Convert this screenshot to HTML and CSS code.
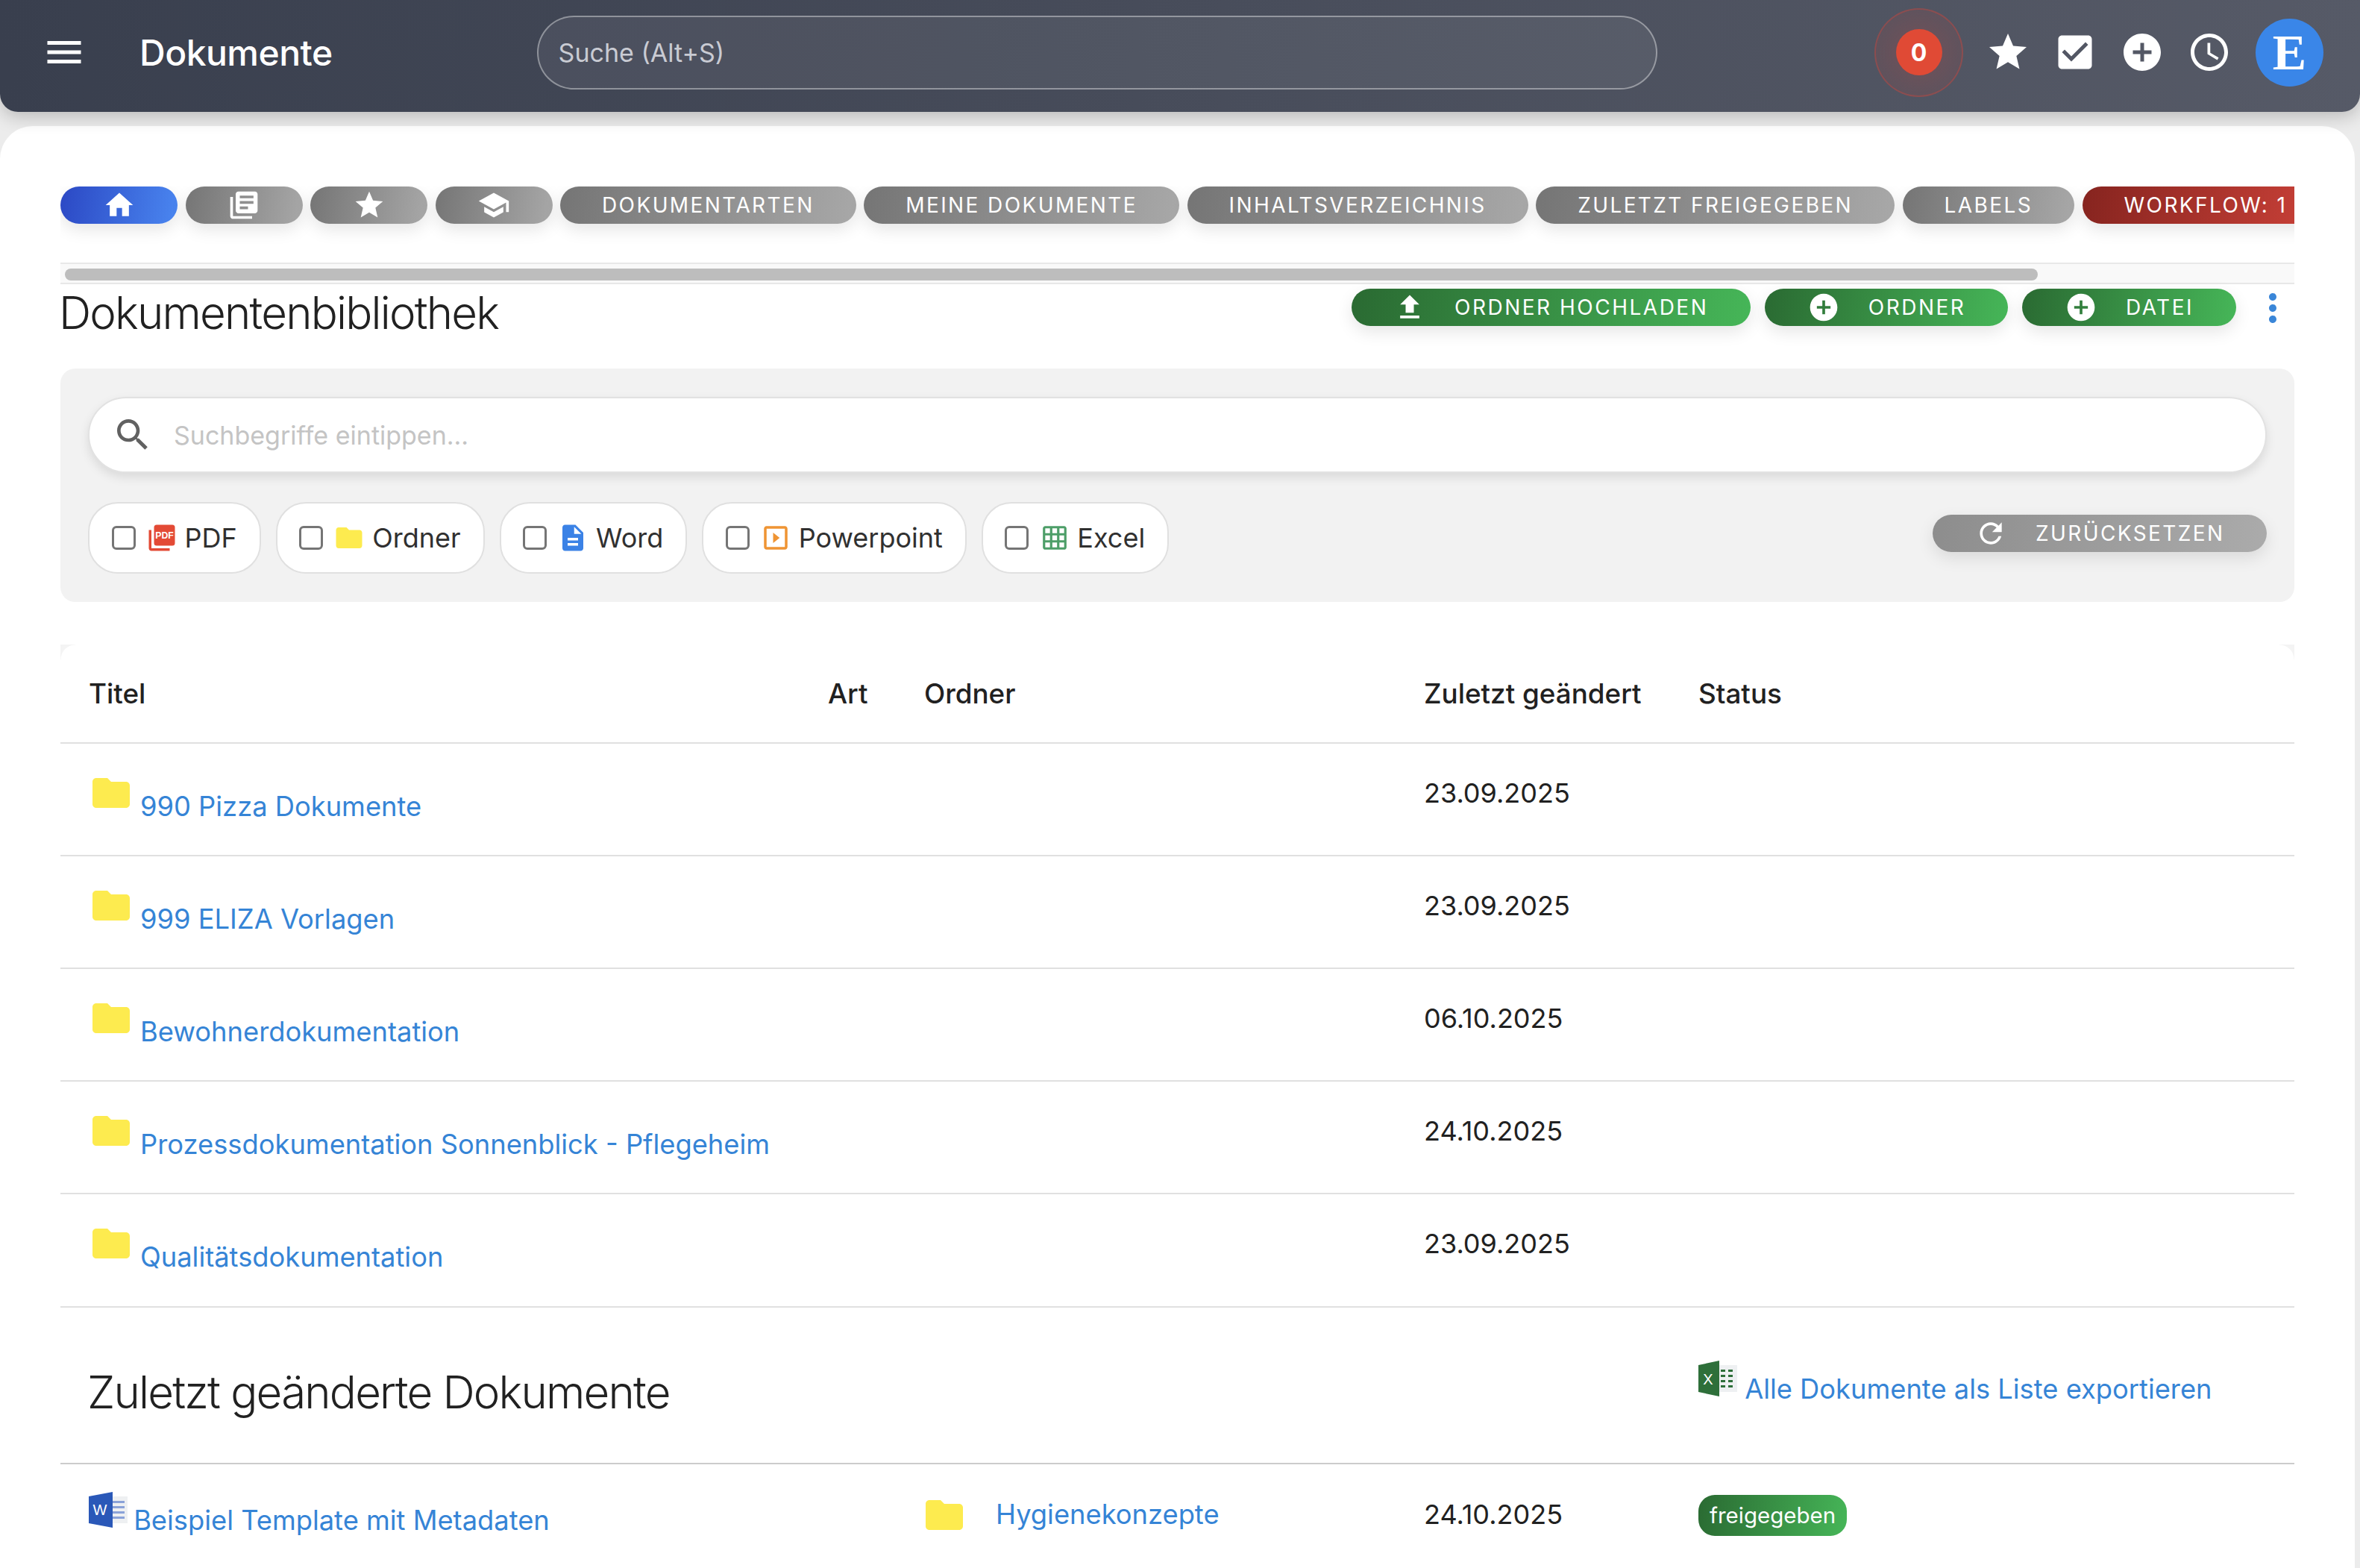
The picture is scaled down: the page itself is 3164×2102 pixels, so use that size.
FILE: index.html
```html
<!DOCTYPE html>
<html lang="de">

<head>
    <meta charset="utf-8">
    <meta name="viewport" content="width=device-width, initial-scale=1.0">
    <title>Dokumente</title>
    <link rel="stylesheet" href="styles.css">
</head>

<body>

    <!-- icon sprite -->
    <svg class="sprite" aria-hidden="true">
        <symbol id="i-menu" viewBox="0 0 24 24"><path d="M3 18h18v-2H3v2zm0-5h18v-2H3v2zm0-7v2h18V6H3z"/></symbol>
        <symbol id="i-home" viewBox="0 0 24 24"><path d="M10 20v-6h4v6h5v-8h3L12 3 2 12h3v8z"/></symbol>
        <symbol id="i-books" viewBox="0 0 24 24"><path d="M4 6H2v14c0 1.1.9 2 2 2h14v-2H4V6zm16-4H8c-1.1 0-2 .9-2 2v12c0 1.1.9 2 2 2h12c1.1 0 2-.9 2-2V4c0-1.1-.9-2-2-2zm-1 9H9V9h10v2zm-4 4H9v-2h6v2zm4-8H9V5h10v2z"/></symbol>
        <symbol id="i-star" viewBox="0 0 24 24"><path d="M12 17.27L18.18 21l-1.64-7.03L22 9.24l-7.19-.61L12 2 9.19 8.63 2 9.24l5.46 4.73L5.82 21z"/></symbol>
        <symbol id="i-school" viewBox="0 0 24 24"><path d="M5 13.18v4L12 21l7-3.82v-4L12 17l-7-3.82zM12 3L1 9l11 6 9-4.91V17h2V9L12 3z"/></symbol>
        <symbol id="i-check" viewBox="0 0 24 24"><path d="M19 3H5c-1.11 0-2 .9-2 2v14c0 1.1.89 2 2 2h14c1.11 0 2-.9 2-2V5c0-1.1-.89-2-2-2zm-9 14l-5-5 1.41-1.41L10 14.17l7.59-7.59L19 8l-9 9z"/></symbol>
        <symbol id="i-add" viewBox="0 0 24 24"><path d="M12 2C6.48 2 2 6.48 2 12s4.48 10 10 10 10-4.48 10-10S17.52 2 12 2zm5 11h-4v4h-2v-4H7v-2h4V7h2v4h4v2z"/></symbol>
        <symbol id="i-clock" viewBox="0 0 24 24"><path d="M11.99 2C6.47 2 2 6.48 2 12s4.47 10 9.99 10C17.52 22 22 17.52 22 12S17.52 2 11.99 2zM12 20c-4.42 0-8-3.58-8-8s3.58-8 8-8 8 3.58 8 8-3.58 8-8 8zm.5-13H11v6l5.25 3.15.75-1.23-4.5-2.67z"/></symbol>
        <symbol id="i-upload" viewBox="0 0 24 24"><path d="M9 16h6v-6h4l-7-7-7 7h4zm-4 2h14v2H5z"/></symbol>
        <symbol id="i-refresh" viewBox="0 0 24 24"><path d="M17.65 6.35C16.2 4.9 14.21 4 12 4c-4.42 0-7.99 3.58-7.99 8s3.57 8 7.99 8c3.73 0 6.84-2.55 7.73-6h-2.08c-.82 2.33-3.04 4-5.65 4-3.31 0-6-2.69-6-6s2.69-6 6-6c1.66 0 3.14.69 4.22 1.78L13 11h7V4l-2.35 2.35z"/></symbol>
        <symbol id="i-search" viewBox="0 0 24 24"><path d="M15.5 14h-.79l-.28-.27C15.41 12.59 16 11.11 16 9.5 16 5.91 13.09 3 9.5 3S3 5.91 3 9.5 5.91 16 9.5 16c1.61 0 3.09-.59 4.23-1.57l.27.28v.79l5 4.99L20.49 19l-4.99-5zm-6 0C7.01 14 5 11.99 5 9.5S7.01 5 9.5 5 14 7.01 14 9.5 11.99 14 9.5 14z"/></symbol>
        <symbol id="i-folder" viewBox="0 0 24 24"><path d="M10 4H4c-1.1 0-1.99.9-1.99 2L2 18c0 1.1.9 2 2 2h16c1.1 0 2-.9 2-2V8c0-1.1-.9-2-2-2h-8l-2-2z"/></symbol>
        <symbol id="i-more" viewBox="0 0 24 24"><path d="M12 8c1.1 0 2-.9 2-2s-.9-2-2-2-2 .9-2 2 .9 2 2 2zm0 2c-1.1 0-2 .9-2 2s.9 2 2 2 2-.9 2-2-.9-2-2-2zm0 6c-1.1 0-2 .9-2 2s.9 2 2 2 2-.9 2-2-.9-2-2-2z"/></symbol>
        <symbol id="i-doc" viewBox="0 0 24 24"><path d="M14 2H6c-1.1 0-1.99.9-1.99 2L4 20c0 1.1.89 2 1.99 2H18c1.1 0 2-.9 2-2V8l-6-6zm2 16H8v-2h8v2zm0-4H8v-2h8v2zm-3-5V3.5L18.5 9H13z"/></symbol>
        <symbol id="i-slides" viewBox="0 0 24 24"><path d="M10 8v8l5-4-5-4zm9-5H5c-1.1 0-2 .9-2 2v14c0 1.1.9 2 2 2h14c1.1 0 2-.9 2-2V5c0-1.1-.9-2-2-2zm0 16H5V5h14v14z"/></symbol>
        <symbol id="i-grid" viewBox="0 0 24 24"><path d="M20 2H4c-1.1 0-2 .9-2 2v16c0 1.1.9 2 2 2h16c1.1 0 2-.9 2-2V4c0-1.1-.9-2-2-2zM8 20H4v-4h4v4zm0-6H4v-4h4v4zm0-6H4V4h4v4zm6 12h-4v-4h4v4zm0-6h-4v-4h4v4zm0-6h-4V4h4v4zm6 12h-4v-4h4v4zm0-6h-4v-4h4v4zm0-6h-4V4h4v4z"/></symbol>
    </svg>

    <header class="topbar">
        <svg class="ico topbar-menu"><use href="#i-menu"/></svg>
        <div class="topbar-title">Dokumente</div>
        <div class="topbar-search">Suche (Alt+S)</div>
        <div class="topbar-actions">
            <div class="alarm"><span class="alarm-dot">0</span></div>
            <svg class="ico action"><use href="#i-star"/></svg>
            <svg class="ico action"><use href="#i-check"/></svg>
            <svg class="ico action"><use href="#i-add"/></svg>
            <svg class="ico action"><use href="#i-clock"/></svg>
            <div class="avatar">E</div>
        </div>
    </header>

    <main class="card">

        <nav class="tabs">
            <a class="pill blue"><svg class="ico"><use href="#i-home"/></svg></a>
            <a class="pill gray"><svg class="ico"><use href="#i-books"/></svg></a>
            <a class="pill gray"><svg class="ico"><use href="#i-star"/></svg></a>
            <a class="pill gray"><svg class="ico"><use href="#i-school"/></svg></a>
            <a class="pill gray">Dokumentarten</a>
            <a class="pill gray">Meine Dokumente</a>
            <a class="pill gray">Inhaltsverzeichnis</a>
            <a class="pill gray">Zuletzt freigegeben</a>
            <a class="pill gray">Labels</a>
            <a class="pill red">Workflow: 1</a>
        </nav>
        <div class="scrollbar"><div class="scrollbar-thumb"></div></div>

        <div class="heading">
            <h1>Dokumentenbibliothek</h1>
            <div class="heading-actions">
                <a class="pill green"><svg class="ico"><use href="#i-upload"/></svg>Ordner hochladen</a>
                <a class="pill green"><svg class="ico"><use href="#i-add"/></svg>Ordner</a>
                <a class="pill green"><svg class="ico"><use href="#i-add"/></svg>Datei</a>
                <svg class="ico more"><use href="#i-more"/></svg>
            </div>
        </div>

        <section class="filters">
            <div class="searchbox">
                <svg class="ico searchbox-icon"><use href="#i-search"/></svg>
                <span class="searchbox-hint">Suchbegriffe eintippen...</span>
            </div>
            <div class="filter-row">
                <label class="chip">
                    <span class="box"></span>
                    <svg class="chip-icon" viewBox="0 0 24 24">
                        <path class="pdf-back" d="M4 6H2v14c0 1.1.9 2 2 2h14v-2H4V6z"/>
                        <rect class="pdf-front" x="6" y="2" width="16" height="16" rx="2"/>
                        <text class="pdf-text" x="14" y="12.5">PDF</text>
                    </svg>
                    PDF
                </label>
                <label class="chip">
                    <span class="box"></span>
                    <svg class="chip-icon yellow"><use href="#i-folder"/></svg>
                    Ordner
                </label>
                <label class="chip">
                    <span class="box"></span>
                    <svg class="chip-icon word"><use href="#i-doc"/></svg>
                    Word
                </label>
                <label class="chip">
                    <span class="box"></span>
                    <svg class="chip-icon ppt"><use href="#i-slides"/></svg>
                    Powerpoint
                </label>
                <label class="chip">
                    <span class="box"></span>
                    <svg class="chip-icon excel"><use href="#i-grid"/></svg>
                    Excel
                </label>
                <a class="pill reset"><svg class="ico"><use href="#i-refresh"/></svg>Zurücksetzen</a>
            </div>
        </section>

        <table class="docs">
            <thead>
                <tr>
                    <th class="col-title">Titel</th>
                    <th class="col-art">Art</th>
                    <th class="col-folder">Ordner</th>
                    <th class="col-date">Zuletzt geändert</th>
                    <th>Status</th>
                </tr>
            </thead>
            <tbody>
                <tr>
                    <td class="title-cell"><svg class="folder"><use href="#i-folder"/></svg><a class="link">990 Pizza Dokumente</a></td>
                    <td></td><td></td>
                    <td class="date">23.09.2025</td>
                    <td></td>
                </tr>
                <tr>
                    <td class="title-cell"><svg class="folder"><use href="#i-folder"/></svg><a class="link">999 ELIZA Vorlagen</a></td>
                    <td></td><td></td>
                    <td class="date">23.09.2025</td>
                    <td></td>
                </tr>
                <tr>
                    <td class="title-cell"><svg class="folder"><use href="#i-folder"/></svg><a class="link">Bewohnerdokumentation</a></td>
                    <td></td><td></td>
                    <td class="date">06.10.2025</td>
                    <td></td>
                </tr>
                <tr>
                    <td class="title-cell"><svg class="folder"><use href="#i-folder"/></svg><a class="link">Prozessdokumentation Sonnenblick - Pflegeheim</a></td>
                    <td></td><td></td>
                    <td class="date">24.10.2025</td>
                    <td></td>
                </tr>
                <tr class="row-last">
                    <td class="title-cell"><svg class="folder"><use href="#i-folder"/></svg><a class="link">Qualitätsdokumentation</a></td>
                    <td></td><td></td>
                    <td class="date">23.09.2025</td>
                    <td></td>
                </tr>
                <tr class="section-row">
                    <td colspan="4"><h2>Zuletzt geänderte Dokumente</h2></td>
                    <td class="export-cell">
                        <svg class="excel-logo" viewBox="0 0 26 24">
                            <rect class="sheet" x="12" y="3" width="14" height="18"/>
                            <path class="cells" d="M15 6h3v1.5h-3zM20 6h3v1.5h-3zM15 9.5h3V11h-3zM20 9.5h3V11h-3zM15 13h3v1.5h-3zM20 13h3v1.5h-3zM15 16.500h3V18h-3zM20 16.500h3V18h-3z"/>
                            <path class="cover" d="M14 0v24L0 21V3z"/>
                            <text class="logo-letter" x="6.500" y="16">X</text>
                        </svg>
                        <a class="link">Alle Dokumente als Liste exportieren</a>
                    </td>
                </tr>
                <tr class="doc-row">
                    <td class="title-cell">
                        <svg class="word-logo" viewBox="0 0 26 24">
                            <rect class="sheet" x="12" y="3" width="14" height="18"/>
                            <path class="lines" d="M15 6h9v1.500h-9zM15 9.500h9V11h-9zM15 13h9v1.500h-9zM15 16.500h9V18h-9z"/>
                            <path class="cover" d="M16 0v24L0 21V3z"/>
                            <text class="logo-letter" x="7.500" y="15.500">W</text>
                        </svg>
                        <a class="link">Beispiel Template mit Metadaten</a>
                    </td>
                    <td></td>
                    <td class="folder-cell"><svg class="folder"><use href="#i-folder"/></svg><a class="link">Hygienekonzepte</a></td>
                    <td class="date">24.10.2025</td>
                    <td class="status-cell"><span class="badge">freigegeben</span></td>
                </tr>
            </tbody>
        </table>

    </main>

</body>

</html>
```

FILE: styles.css
```css
* {
    box-sizing: border-box;
}

html,
body {
    height: 2102px;
    overflow: hidden;
}

body {
    margin: 0;
    background-color: #ececec;
    font-family: 'Inter', 'Roboto', sans-serif;
    font-size: 36px;
    color: #212121;
}

.sprite {
    display: none;
}

.ico {
    width: 44px;
    height: 44px;
    fill: currentColor;
    flex: none;
}

/********************  Top bar  ********************/

.topbar {
    position: relative;
    z-index: 2;
    display: flex;
    align-items: center;
    height: 150px;
    padding-left: 56px;
    padding-right: 49px;
    padding-bottom: 10px;
    color: #fff;
    background: linear-gradient(90deg, #393f4e, #565a67);
    border-radius: 0 0 24px 24px;
    box-shadow: 0 6px 24px rgba(0, 0, 0, 0.22);
}

.topbar-menu {
    width: 60px;
    height: 60px;
}

.topbar-title {
    margin-left: 71px;
    font-size: 48px;
    font-weight: 500;
    letter-spacing: -0.5px;
}

.topbar-search {
    display: flex;
    align-items: center;
    width: 1502px;
    height: 99px;
    margin-left: 274px;
    padding-left: 27px;
    font-size: 34px;
    color: #c9cbd3;
    background-color: rgba(255, 255, 255, 0.06);
    border: 2px solid rgba(255, 255, 255, 0.38);
    border-radius: 50px;
}

.topbar-actions {
    display: flex;
    align-items: center;
    margin-left: auto;
}

.alarm {
    display: flex;
    align-items: center;
    justify-content: center;
    width: 119px;
    height: 119px;
    margin-right: 30px;
    border: 2px solid rgba(205, 70, 60, 0.4);
    border-radius: 50%;
    background: radial-gradient(circle, rgba(205, 70, 60, 0.28), rgba(205, 70, 60, 0.06));
}

.alarm-dot {
    display: flex;
    align-items: center;
    justify-content: center;
    width: 62px;
    height: 62px;
    font-size: 32px;
    font-weight: 700;
    background-color: #e04a35;
    border-radius: 50%;
}

.action {
    width: 60px;
    height: 60px;
    margin-right: 30px;
}

.avatar {
    display: flex;
    align-items: center;
    justify-content: center;
    width: 91px;
    height: 91px;
    margin-left: 2px;
    font-family: 'Liberation Serif', serif;
    font-size: 68px;
    font-weight: 700;
    background-color: #3a86e8;
    border-radius: 50%;
}

/********************  Card  ********************/

.card {
    width: 3157px;
    height: 1933px;
    margin-top: 19px;
    padding: 81px 81px 0;
    background-color: #fff;
    border-radius: 44px 44px 0 0;
    overflow: hidden;
}

/* pill = all the gradient buttons */
.pill {
    display: inline-flex;
    align-items: center;
    flex: none;
    height: 50px;
    padding: 0 56px;
    font-size: 28px;
    letter-spacing: 2.4px;
    text-transform: uppercase;
    color: #fff;
    border-radius: 25px;
    box-shadow: 0 8px 22px rgba(0, 0, 0, 0.1);
}

.pill .ico {
    margin-right: 38px;
}

.blue {
    background: linear-gradient(100deg, #2b48c4, #4a86f0);
}

.gray {
    background: linear-gradient(100deg, #757575, #a8a8a8);
}

.red {
    background: linear-gradient(100deg, #86241f, #cc4239);
}

.green {
    padding: 0 56.5px;
    letter-spacing: 2.5px;
    background: linear-gradient(100deg, #2a6a32, #46b658);
}

.reset {
    margin-left: auto;
    margin-bottom: 12px;
    padding: 0 56.5px;
    background: linear-gradient(100deg, #8d8d8d, #ababab);
}

.tabs {
    display: flex;
    gap: 10.500px;
    width: 2995px;
    height: 102px;
    overflow: hidden;
}

.tabs .ico {
    margin: 0 0.5px;
}

.scrollbar {
    width: 2995px;
    height: 29px;
    padding: 6px;
    background-color: #f9f9f9;
    border-top: 2px solid #e8e8e8;
    border-bottom: 2px solid #e8e8e8;
}

.scrollbar-thumb {
    width: 2645px;
    height: 16px;
    background-color: #bdbdbd;
    border-radius: 8px;
}

.heading {
    display: flex;
    justify-content: space-between;
    width: 2995px;
    height: 113px;
    padding-top: 6px;
}

h1 {
    margin: -3px 0 0 -2px;
    font-size: 60px;
    font-weight: 300;
    line-height: 70px;
    letter-spacing: -1.800px;
}

.heading-actions {
    display: flex;
    align-items: flex-start;
    gap: 19.500px;
}

.more {
    width: 60px;
    height: 60px;
    margin-left: 0;
    margin-right: -1px;
    margin-top: -4px;
    color: #3a86d8;
}

/********************  Filters  ********************/

.filters {
    width: 2995px;
    height: 313px;
    padding: 38px 37px 0;
    background-color: #f2f2f2;
    border-radius: 20px;
}

.searchbox {
    display: flex;
    align-items: center;
    height: 102px;
    padding-left: 30px;
    background-color: #fff;
    border: 2px solid #e2e2e2;
    border-radius: 51px;
    box-shadow: 0 6px 14px rgba(0, 0, 0, 0.1);
}

.searchbox-icon {
    width: 56px;
    height: 56px;
    color: #616161;
}

.searchbox-hint {
    margin-left: 27px;
    font-size: 34px;
    color: #c4c4c4;
}

.filter-row {
    display: flex;
    align-items: center;
    gap: 20px;
    margin-top: 39px;
}

.chip {
    display: flex;
    align-items: center;
    height: 96px;
    padding: 0 30px 0 29.500px;
    background-color: #fff;
    border: 2px solid #e0e0e0;
    border-radius: 40px;
    color: #303030;
}

.box {
    width: 32px;
    height: 32px;
    background-color: #fff;
    border: 3px solid #757575;
    border-radius: 6px;
}

.chip-icon {
    width: 42px;
    height: 42px;
    margin: 0 10px 0 14px;
}

.pdf-back,
.pdf-front {
    fill: #e34a35;
}

.pdf-text {
    font-family: 'Liberation Sans', sans-serif;
    font-size: 7px;
    font-weight: 700;
    text-anchor: middle;
    fill: #fff;
}

.yellow {
    fill: #fdeb4f;
}

.word {
    fill: #3b82e6;
}

.ppt {
    fill: #ef9433;
}

.excel {
    width: 38px;
    height: 38px;
    margin: 0 11px 0 16px;
    fill: #4d9e68;
}

/********************  Table  ********************/

.docs {
    width: 2995px;
    margin-top: 57px;
    border-collapse: separate;
    border-spacing: 0;
    table-layout: fixed;
    background:
        radial-gradient(circle at 100% 100%, transparent 19px, #f4f4f4 20px) 0 0 / 20px 20px no-repeat,
        radial-gradient(circle at 0 100%, transparent 19px, #f4f4f4 20px) 100% 0 / 20px 20px no-repeat;
}

.docs th,
.docs td {
    height: 151px;
    padding: 0;
    text-align: left;
    vertical-align: top;
    border-bottom: 2px solid #e0e0e0;
}

.docs th {
    height: 133px;
    padding-top: 41px;
    font-size: 36.800px;
    font-weight: 500;
    line-height: 50px;
}

.docs th:first-child,
.docs td:first-child {
    padding-left: 38px;
}

.col-title {
    width: 1029px;
}

.col-art {
    width: 129px;
}

.col-folder {
    width: 670px;
}

.col-date {
    width: 368px;
}

.link {
    font-size: 36.300px;
    color: #3584d6;
    line-height: 50px;
}

.docs td.title-cell {
    padding-top: 36px;
}

.title-cell .link {
    display: inline-block;
    margin-top: 23px;
    margin-left: 9px;
    vertical-align: top;
}

.folder {
    width: 60px;
    height: 60px;
    fill: #fdeb4f;
    vertical-align: top;
}

.docs td.date {
    padding-top: 41px;
    line-height: 50px;
}

.row-last td {
    height: 152px;
}

.section-row td {
    height: 210px;
    border-bottom-color: #cccccc;
}

h2 {
    margin: 78px 0 0 -2px;
    font-size: 60px;
    font-weight: 300;
    line-height: 70px;
    letter-spacing: -1.800px;
}

.export-cell .link {
    display: inline-block;
    margin-top: 13px;
    vertical-align: top;
}

.docs td.export-cell {
    padding-top: 71px;
}

.excel-logo,
.word-logo {
    width: 52px;
    height: 48px;
    vertical-align: top;
}

.sheet {
    fill: #eef0f2;
}

.cells {
    fill: #2e6f3a;
}

.excel-logo .cover {
    fill: #2e6f3a;
}

.lines {
    fill: #8aa2d8;
}

.word-logo .cover {
    fill: #2a58b8;
}

.logo-letter {
    font-family: 'Liberation Sans', sans-serif;
    font-size: 10px;
    text-anchor: middle;
    fill: #fff;
}

.doc-row td {
    border-bottom: 0;
}

.docs .doc-row td.title-cell {
    padding-top: 37px;
}

.doc-row .title-cell .link {
    margin-top: 13px;
    margin-left: -2px;
}

.docs td.folder-cell {
    padding-top: 38px;
}

.folder-cell .folder {
    margin-left: -3px;
}

.folder-cell .link {
    display: inline-block;
    margin-top: 4px;
    margin-left: 39px;
    vertical-align: top;
}

.docs .doc-row td.date {
    padding-top: 42px;
}

.docs td.status-cell {
    padding-top: 41px;
}

.badge {
    display: inline-block;
    height: 55px;
    padding: 0 15px;
    font-size: 29.500px;
    line-height: 55px;
    color: #fff;
    background: linear-gradient(100deg, #2a6a32, #46b658);
    border-radius: 22px;
}
```
